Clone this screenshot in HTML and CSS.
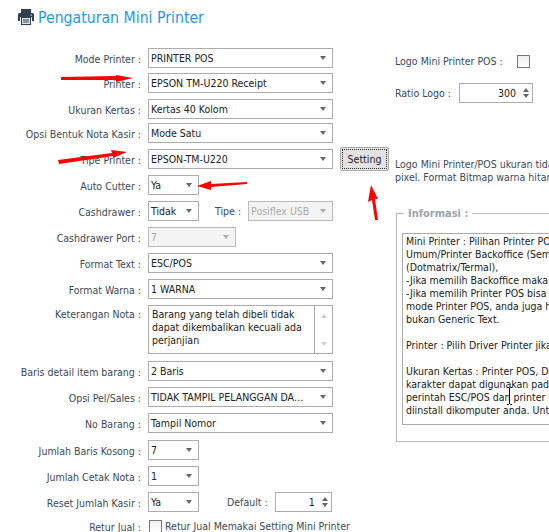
FILE: index.html
```html
<!DOCTYPE html>
<html lang="en">
<head>
    <meta charset="UTF-8">
    <title>Pengaturan Mini Printer</title>
    <link rel="stylesheet" href="styles.css">
</head>
<body>
    <header class="page-title">
        <svg class="title-icon" width="16" height="16" viewBox="0 0 16 16">
            <path fill="#2f4052" d="M3 0h10v5H3z"/>
            <path fill="#2f4052" d="M1.500 4h13A1.500 1.500 0 0 1 16 5.500V12h-2V8H2v4H0V5.500A1.500 1.500 0 0 1 1.500 4z"/>
            <path fill="#2f4052" d="M3 8h10v8H3z"/>
            <path fill="#dfe3e6" d="M4 9h8v6H4z"/>
            <path fill="#2f4052" d="M5 10.500h6v1H5zm0 2h6v1H5z"/>
            <path fill="#9aa5ae" d="M12.500 5.500h1.500V7h-1.500z"/>
        </svg>
        <h1>Pengaturan Mini Printer</h1>
    </header>

    <main class="container">
        <div class="form-col">
            <div class="row">
                <label>Mode Printer :</label>
                <div class="select wide">PRINTER POS</div>
            </div>
            <div class="row tight">
                <label>Printer :</label>
                <div class="select wide">EPSON TM-U220 Receipt</div>
            </div>
            <div class="row">
                <label>Ukuran Kertas :</label>
                <div class="select wide">Kertas 40 Kolom</div>
            </div>
            <div class="row tighter">
                <label>Opsi Bentuk Nota Kasir :</label>
                <div class="select wide">Mode Satu</div>
            </div>
            <div class="row">
                <label>Tipe Printer :</label>
                <div class="select wide">EPSON-TM-U220</div>
                <button class="btn">Setting</button>
            </div>
            <div class="row">
                <label>Auto Cutter :</label>
                <div class="select small">Ya</div>
            </div>
            <div class="row">
                <label>Cashdrawer :</label>
                <div class="select small">Tidak</div>
                <span class="inline-label type-label">Tipe :</span>
                <div class="select type disabled">Posiflex USB</div>
            </div>
            <div class="row">
                <label>Cashdrawer Port :</label>
                <div class="select port disabled">7</div>
            </div>
            <div class="row">
                <label>Format Text :</label>
                <div class="select wide">ESC/POS</div>
            </div>
            <div class="row">
                <label>Format Warna :</label>
                <div class="select wide">1 WARNA</div>
            </div>
            <div class="row memo-row">
                <label>Keterangan Nota :</label>
                <div class="memo">
                    <div class="memo-text">Barang yang telah dibeli tidak dapat dikembalikan kecuali ada perjanjian</div>
                    <div class="memo-scroll"><i class="arrow-up"></i><i class="arrow-down"></i></div>
                </div>
            </div>
            <div class="row loose">
                <label>Baris detail item barang :</label>
                <div class="select wide">2 Baris</div>
            </div>
            <div class="row">
                <label>Opsi Pel/Sales :</label>
                <div class="select wide">TIDAK TAMPIL PELANGGAN DA…</div>
            </div>
            <div class="row">
                <label>No Barang :</label>
                <div class="select wide">Tampil Nomor</div>
            </div>
            <div class="row loose">
                <label>Jumlah Baris Kosong :</label>
                <div class="select small">7</div>
            </div>
            <div class="row">
                <label>Jumlah Cetak Nota :</label>
                <div class="select small">1</div>
            </div>
            <div class="row">
                <label>Reset Jumlah Kasir :</label>
                <div class="select small">Ya</div>
                <span class="inline-label default-label">Default :</span>
                <div class="spin default-spin">1<span class="spin-btns"><i class="arrow-up"></i><i class="arrow-down"></i></span></div>
            </div>
            <div class="row retur-row">
                <label>Retur Jual :</label>
                <span class="check"></span>
                <span class="check-text">Retur Jual Memakai Setting Mini Printer</span>
            </div>
        </div>

        <aside class="info-col">
            <div class="logo-row">
                <span>Logo Mini Printer POS :</span>
                <span class="check"></span>
            </div>
            <div class="ratio-row">
                <span>Ratio Logo :</span>
                <div class="spin ratio-spin">300<span class="spin-btns"><i class="arrow-up"></i><i class="arrow-down"></i></span></div>
            </div>
            <p class="logo-note">Logo Mini Printer/POS ukuran tidak boleh lebih dari 300 x 300<br>pixel. Format Bitmap warna hitam putih saja</p>
            <fieldset class="info-box">
                <legend>Informasi :</legend>
                <div class="info-text">Mini Printer : Pilihan Printer POS atau Printer
Umum/Printer Backoffice (Semua jenis printer
(Dotmatrix/Termal),
-Jika memilih Backoffice maka cetak nota biasa
-Jika memilih Printer POS bisa cetak langsung
mode Printer POS, anda juga harus memilih driver
bukan Generic Text.

Printer : Pilih Driver Printer jika sudah terinstall

Ukuran Kertas : Printer POS, Dotmatrix jumlah
karakter dapat digunakan pada kertas, dengan
perintah ESC/POS dan printer harus sudah
diinstall dikomputer anda. Untuk printer lain</div>
            </fieldset>
        </aside>
    </main>

    <!-- red arrows drawn on top of the screenshot -->
    <svg class="arrows" width="549" height="532" viewBox="0 0 549 532">
        <path fill="#f00" d="M61 77L116 76V75L133 78 116 82V80L61 80z"/>
        <path fill="#f00" d="M58 160L112 153 111 150 127 152 113 158V156L59 164z"/>
        <path fill="#f00" d="M247 182L211 184V181L197 186 211 190V187L247 184z"/>
        <path fill="#f00" d="M375 220L372 200 368 202 371 185 378 199 375 199 378 220z"/>
    </svg>
    <svg class="cursor" width="7" height="18" viewBox="0 0 7 18">
        <path fill="none" stroke="#000" d="M1 .5h1.500L3.500 1.500 4.500 .5H6M3.500 1.500v15M1 17.500h1.500l1-1 1 1H6"/>
    </svg>
</body>
</html>
```

FILE: styles.css
```css
* {
    box-sizing: border-box;
    margin: 0;
    padding: 0;
}

html, body {
    height: 532px;
    overflow: hidden;
}

body {
    position: relative;
    font-family: "DejaVu Sans Condensed", "DejaVu Sans", sans-serif;
    font-size: 10.500px;
    color: #3b4a5a;
    background: #fff;
    width: 549px;
}

.page-title {
    display: flex;
    align-items: flex-start;
    gap: 4px;
    padding: 9px 0 0 18px;
    height: 48px;
}

.page-title h1 {
    font-size: 15.700px;
    font-weight: 400;
    line-height: 18px;
    color: #1e9be4;
}

.container {
    display: flex;
}

.form-col {
    width: 395px;
    flex: none;
}

.row {
    display: flex;
    align-items: center;
    height: 20px;
    margin-bottom: 6px;
}

.row.tight { margin-top: -1px; }
.row.tighter { margin-top: -2px; }
.row.loose { margin-top: 7px; }

.row label {
    width: 141px;
    margin-right: 7px;
    padding-top: 1px;
    text-align: right;
    flex: none;
    white-space: nowrap;
}

.select {
    position: relative;
    height: 20px;
    line-height: 18px;
    border: 1px solid #acacac;
    padding-left: 2px;
    color: #222;
    background: #fff;
    white-space: nowrap;
}

.select::after {
    content: "";
    position: absolute;
    right: 6px;
    top: 7px;
    border-left: 3.500px solid transparent;
    border-right: 3.500px solid transparent;
    border-top: 4px solid #666;
}

.select.wide { width: 185px; }
.select.small { width: 51px; }
.select.port { width: 88px; }
.select.type { width: 85px; }

.select.disabled {
    background: #f4f4f4;
    color: #aaa;
    border-color: #bbb;
}

.select.disabled::after { border-top-color: #aaa; }

.inline-label { color: #3b4a5a; white-space: nowrap; }
.type-label { margin-left: 16px; margin-right: 7px; }
.default-label { margin-left: 28px; margin-right: 7px; }

.btn {
    height: 24px;
    width: 49px;
    margin-left: 7px;
    font: inherit;
    color: #222;
    background: #e2e2e2;
    border: 1px solid #acacac;
    border-radius: 2px;
    outline: 1px dotted #333;
    outline-offset: -3px;
}

.memo-row {
    height: 49px;
    align-items: flex-start;
}

.memo-row label { padding-top: 3px; }

.memo {
    display: flex;
    width: 185px;
    height: 49px;
    border: 1px solid #acacac;
}

.memo-text {
    flex: 1;
    padding: 2px 3px;
    line-height: 13px;
    color: #222;
}

.memo-scroll {
    width: 18px;
    border-left: 1px solid #acacac;
    display: flex;
    flex-direction: column;
    justify-content: space-between;
    align-items: center;
    padding: 8px 0 7px;
}

.arrow-up, .arrow-down {
    display: block;
    border-left: 3.500px solid transparent;
    border-right: 3.500px solid transparent;
}

.arrow-up { border-bottom: 4px solid #666; }
.arrow-down { border-top: 4px solid #666; }
.memo-scroll i { border-bottom-color: #ccc; border-top-color: #ccc; }

.spin {
    display: flex;
    justify-content: flex-end;
    align-items: center;
    height: 20px;
    border: 1px solid #acacac;
    color: #222;
    background: #fff;
}

.default-spin { width: 57px; }
.ratio-spin { width: 74px; }

.spin-btns {
    display: flex;
    flex-direction: column;
    gap: 2px;
    margin: 0 3px 0 7px;
}

.retur-row {
    height: 16px;
}

.check {
    width: 13px;
    height: 13px;
    border: 1px solid #777;
    background: linear-gradient(#eee, #fff);
    flex: none;
}

.retur-row .check { margin-left: 1px; }
.check-text { margin-left: 3px; white-space: nowrap; }

.info-col {
    flex: none;
    width: 170px;
}

.logo-row {
    display: flex;
    align-items: center;
    gap: 14px;
    height: 20px;
    margin-top: 3px;
    white-space: nowrap;
}

.ratio-row {
    display: flex;
    align-items: center;
    gap: 8px;
    height: 20px;
    margin-top: 12px;
    white-space: nowrap;
}

.logo-note {
    margin-top: 55px;
    line-height: 13px;
    white-space: nowrap;
}

.info-box {
    width: 200px;
    margin-top: 23px;
    margin-left: 1px;
    height: 235px;
    border: 1px solid #bbb;
    padding: 13px 6px 0 5px;
    position: relative;
}

.info-box legend {
    margin-left: 2px;
    padding: 0 4px;
    font-size: 11px;
    font-weight: 700;
    color: #9aa3ab;
}

.info-text {
    height: 192px;
    border: 1px solid #acacac;
    padding: 1px 3px;
    line-height: 13px;
    color: #222;
    white-space: pre;
    overflow: hidden;
}

.arrows {
    position: absolute;
    left: 0;
    top: 0;
}

.cursor {
    position: absolute;
    left: 506px;
    top: 387px;
}
```
